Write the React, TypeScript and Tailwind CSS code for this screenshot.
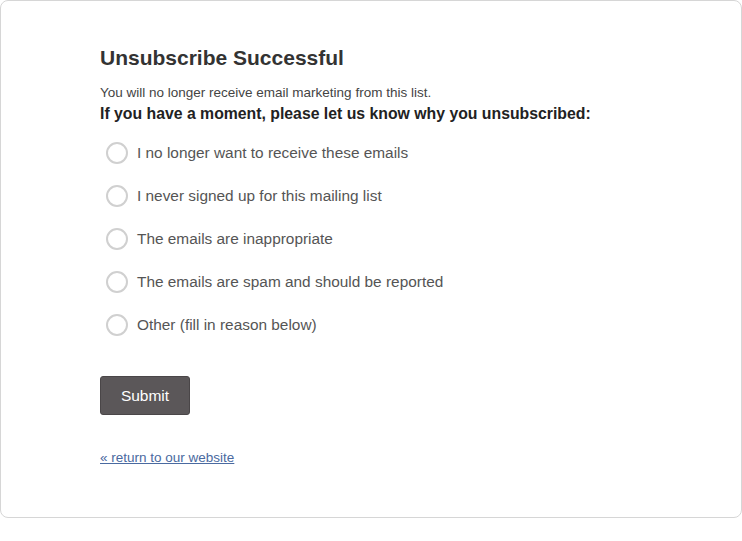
const reasons = [
  "I no longer want to receive these emails",
  "I never signed up for this mailing list",
  "The emails are inappropriate",
  "The emails are spam and should be reported",
  "Other (fill in reason below)",
];

export default function App() {
  return (
    <div className="bg-white w-[742px] h-[541px] font-['Liberation_Sans',Arial,sans-serif]">
      <div className="h-[518px] border border-[#d6d6d6] rounded-lg pl-[99px] pt-[45px]">
        <h1 className="text-[21px] leading-[24px] font-bold text-[#333]">Unsubscribe Successful</h1>
        <p className="mt-[15px] text-[13.5px] leading-[16px] text-[#444]">
          You will no longer receive email marketing from this list.
        </p>
        <p className="mt-[4px] text-[15.8px] leading-[18px] font-bold text-[#222]">
          If you have a moment, please let us know why you unsubscribed:
        </p>
        <div className="mt-[19px] flex flex-col gap-[21px]">
          {reasons.map((r) => (
            <label key={r} className="flex items-center h-[22px]">
              <span className="ml-[6px] w-[22px] h-[22px] rounded-full border-2 border-[#d0d0d0] bg-white" />
              <span className="ml-[9px] text-[15.4px] leading-[18px] text-[#555]">{r}</span>
            </label>
          ))}
        </div>
        <button className="mt-[40px] w-[90px] h-[39px] rounded-[3px] bg-[#5b5759] text-white text-[15.5px] border border-[#4a4648]">
          Submit
        </button>
        <div className="mt-[30px]">
          <a href="#" className="text-[13.5px] leading-[16px] text-[#4a6aa0] underline">
            « return to our website
          </a>
        </div>
      </div>
    </div>
  );
}
